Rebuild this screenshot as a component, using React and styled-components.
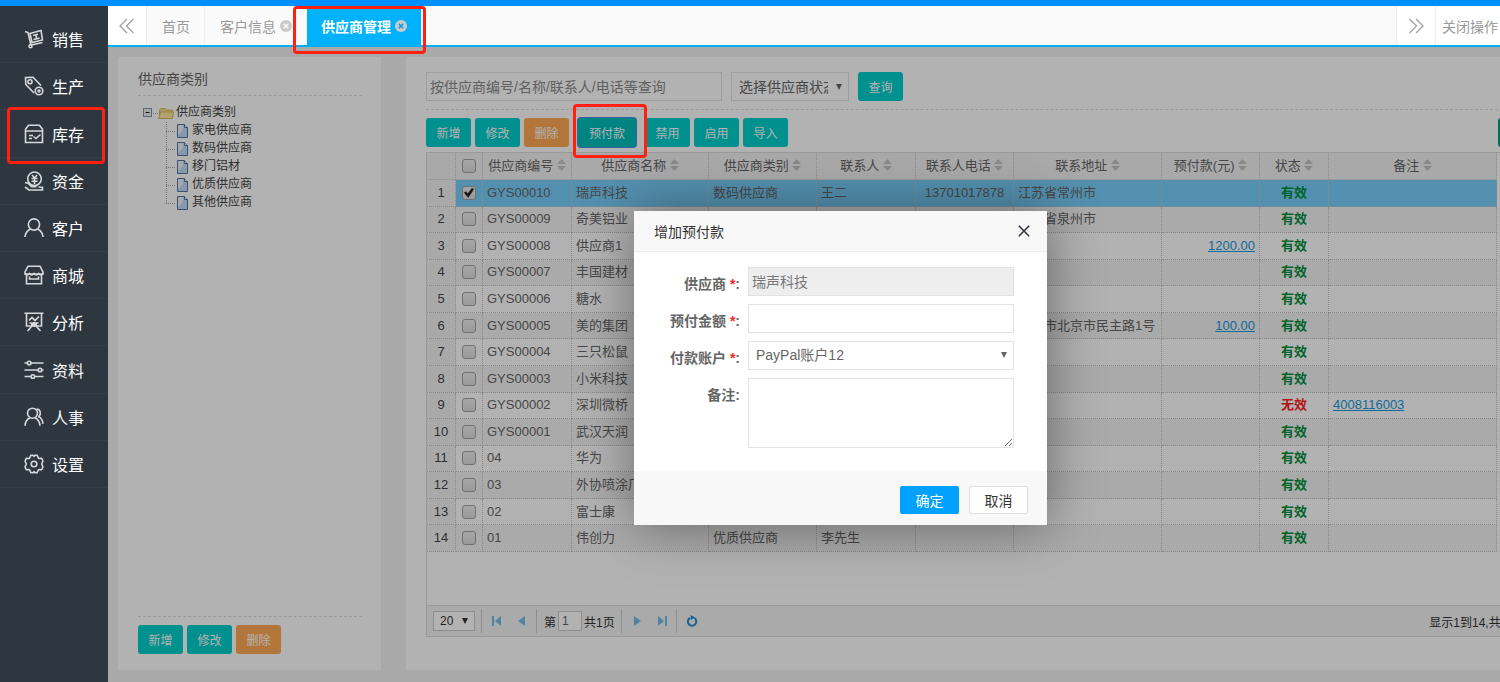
import React, { useState } from 'react';
import styled, { createGlobalStyle, css } from 'styled-components';

const menus = [
  { name: '销售', icon: 'sale' },
  { name: '生产', icon: 'produce' },
  { name: '库存', icon: 'stock', marked: true },
  { name: '资金', icon: 'money' },
  { name: '客户', icon: 'customer' },
  { name: '商城', icon: 'shop' },
  { name: '分析', icon: 'chart' },
  { name: '资料', icon: 'data' },
  { name: '人事', icon: 'staff' },
  { name: '设置', icon: 'setting' },
];

const categories = ['家电供应商', '数码供应商', '移门铝材', '优质供应商', '其他供应商'];

const columns = [
  { key: 'code', title: '供应商编号', width: 89 },
  { key: 'name', title: '供应商名称', width: 137 },
  { key: 'type', title: '供应商类别', width: 108 },
  { key: 'contact', title: '联系人', width: 99 },
  { key: 'phone', title: '联系人电话', width: 98, align: 'center' },
  { key: 'address', title: '联系地址', width: 148 },
  { key: 'prepay', title: '预付款(元)', width: 98, align: 'right', link: true },
  { key: 'status', title: '状态', width: 69, align: 'center' },
  { key: 'remark', title: '备注', width: 168, link: true },
];

const suppliers = [
  { code: 'GYS00010', name: '瑞声科技', type: '数码供应商', contact: '王二', phone: '13701017878', address: '江苏省常州市' },
  { code: 'GYS00009', name: '奇美铝业', address: '福建省泉州市' },
  { code: 'GYS00008', name: '供应商1', prepay: '1200.00' },
  { code: 'GYS00007', name: '丰国建材' },
  { code: 'GYS00006', name: '糖水' },
  { code: 'GYS00005', name: '美的集团', address: '北京市北京市民主路1号', prepay: '100.00' },
  { code: 'GYS00004', name: '三只松鼠' },
  { code: 'GYS00003', name: '小米科技' },
  { code: 'GYS00002', name: '深圳微桥', disabled: true, remark: '4008116003' },
  { code: 'GYS00001', name: '武汉天润' },
  { code: '04', name: '华为' },
  { code: '03', name: '外协喷涂厂' },
  { code: '02', name: '富士康' },
  { code: '01', name: '伟创力', type: '优质供应商', contact: '李先生' },
];

const menuIcons = {
  sale: (
    <>
      <path d="M1 2.500l3 1L7 16l11.500-2.500" />
      <path d="M6 4.500L17 1.500l1.500 9.500L8 13.500z" />
      <path d="M9 6.500l5-1.200M9.500 10.500l6-1.400M12 6l.5 4" />
      <circle cx="6.500" cy="17.200" r="1.500" />
    </>
  ),
  produce: (
    <>
      <path d="M10 17L1.800 8.500 1.500 1.500l7.500-.3L17 9.500" />
      <circle cx="6" cy="5.800" r="2" />
      <circle cx="15" cy="15" r="3.800" />
      <circle cx="15" cy="15" r="1" />
    </>
  ),
  stock: (
    <>
      <path d="M4.500 1.200h11l3 4v13.300h-17V5.200z" />
      <path d="M1.500 7h17M5 11.500h4M5 14.500h3M9.500 12.500l2.500 2 4.500-4" />
    </>
  ),
  money: (
    <>
      <circle cx="10.500" cy="7.800" r="6.800" />
      <path d="M8 4l2.500 3L13 4M7.500 7.500h6M7.500 10.200h6M10.500 7v6" />
      <path d="M1 11.500l3 .8 3.500 3.500h5M1 16l4 3h13.500v-2.500l-4-.5" />
    </>
  ),
  customer: (
    <>
      <circle cx="10" cy="6.500" r="5.600" />
      <path d="M1 19c.3-4 2.500-6.500 5.500-8M19 19c-.3-4-2.500-6.500-5.500-8" />
    </>
  ),
  shop: (
    <>
      <path d="M4 1.200h12L19 7v2H1V7z" />
      <path d="M2.500 9.500v9.300h15V9.500M1 8.500c1.500 2 3 2 4.500 0 1.500 2 3 2 4.500 0 1.500 2 3 2 4.500 0 1.500 2 3 2 4.500 0M5.500 11.500V14h9v-2.500" />
    </>
  ),
  chart: (
    <>
      <path d="M.5 1.200h19M2.500 2v12h15V2M5 8.500l3-3 3 3 4-4M5.500 11h9M7 12.500h6" />
      <path d="M8 14l-4.500 5M12 14l4.500 5M10 10v5" />
    </>
  ),
  data: (
    <>
      <path d="M.5 3H3.500M7 3h12.500M.5 10H14M17.800 10h1.700M.5 16.500H7M10.500 16.500h9" />
      <circle cx="5.200" cy="3" r="1.800" />
      <circle cx="16" cy="10" r="1.800" />
      <circle cx="8.800" cy="16.500" r="1.800" />
    </>
  ),
  staff: (
    <>
      <circle cx="8.500" cy="6.200" r="5" />
      <path d="M1 18.800c.2-4 2-6.500 5-8M16 18.800c-.2-4-2-6.500-5-8M12.800 2c3.700.3 4.700 5 2 7.800 2.500 1 3.700 3.500 4.200 7" />
    </>
  ),
  setting: (
    <>
      <path d="M7 1.200h2l1 1.200 1-1.200h2l1.600 3.300 3-.3L19 7l-1.300 3L19 13l-1.400 2.800-3-.3L13 18.800h-2l-1-1.200-1 1.200H7l-1.600-3.300-3 .3L1 13l1.300-3L1 7l1.400-2.800 3 .3z" strokeLinejoin="round" />
      <circle cx="10" cy="10" r="2.800" />
    </>
  ),
};

function SortIcon() {
  return (
    <svg width="9" height="12" viewBox="0 0 9 12" fill="#c4c4c4" aria-hidden="true">
      <path d="M4.500 0L9 5H0zM4.500 12L9 7H0z" />
    </svg>
  );
}

function CloseBadge() {
  return (
    <svg width="12" height="12" viewBox="0 0 12 12" aria-hidden="true">
      <circle cx="6" cy="6" r="6" fill="#cacaca" />
      <path d="M3.800 3.800l4.400 4.400M8.200 3.800l-4.400 4.400" stroke="currentColor" strokeWidth="1.600" />
    </svg>
  );
}

function Arrow() {
  return (
    <svg width="6" height="6" viewBox="0 0 6 6" fill="currentColor" aria-hidden="true">
      <path d="M0 0h6L3 6z" />
    </svg>
  );
}

function CategoryTree() {
  return (
    <Tree>
      <TreeRow>
        <svg width="10" height="10" viewBox="0 0 10 10" aria-hidden="true">
          <rect x=".5" y=".5" width="8" height="8" fill="#e8eef3" stroke="#8296a8" />
          <path d="M2.500 4.500h4" stroke="#222" />
        </svg>
        <svg width="5" height="18" aria-hidden="true">
          <path d="M0 9.500h5" stroke="#aaa" strokeDasharray="1 1" />
        </svg>
        <svg width="16" height="16" viewBox="0 0 16 16" aria-hidden="true">
          <path d="M1.500 13V5L3 3.500h4L8.500 5h6v8z" fill="#f8dc85" stroke="#d8b65c" />
          <path d="M.8 13.500L2.500 7h13l-1 6.500z" fill="#ffe9a0" stroke="#d8b65c" />
        </svg>
        <LeafText>供应商类别</LeafText>
      </TreeRow>
      <Leaves>
        {categories.map((item, i) => (
          <TreeRow key={item}>
            <svg width="10" height="18" aria-hidden="true">
              <path
                d={i === categories.length - 1 ? 'M.5 0v9M0 9.500h9' : 'M.5 0v18M0 9.500h9'}
                stroke="#aaa"
                strokeDasharray="1 1"
                fill="none"
              />
            </svg>
            <svg width="14" height="14" viewBox="0 0 14 14" aria-hidden="true">
              <path d="M1.500.500h7l3 3v10h-10z" fill="#c0daf6" stroke="#5674a0" />
              <path d="M2 1h5v5l-5 5z" fill="#eaf4ff" />
              <path d="M8.500.500v3h3" fill="#fff" stroke="#5674a0" />
            </svg>
            <LeafText>{item}</LeafText>
          </TreeRow>
        ))}
      </Leaves>
    </Tree>
  );
}

function SupplierTable({ checked, onCheck }) {
  return (
    <Table>
      <thead>
        <tr>
          <NumberHead />
          <CheckHead>
            <Checkbox type="checkbox" aria-label="全选" />
          </CheckHead>
          {columns.map((col) => (
            <HeadCell key={col.key} $width={col.width}>
              {col.title} <SortIcon />
            </HeadCell>
          ))}
        </tr>
      </thead>
      <tbody>
        {suppliers.map((row, i) => (
          <Row key={row.code} $even={i % 2 === 1} $selected={checked === row.code}>
            <NumberCell>{i + 1}</NumberCell>
            <Cell $align="center">
              <Checkbox
                type="checkbox"
                aria-label={row.name}
                checked={checked === row.code}
                onChange={() => onCheck(row.code)}
              />
            </Cell>
            {columns.map((col) => (
              <Cell key={col.key} $align={col.align}>
                {col.key === 'status' && <Status $off={row.disabled}>{row.disabled ? '无效' : '有效'}</Status>}
                {col.link && row[col.key] && <CellLink href="#">{row[col.key]}</CellLink>}
                {!col.link && row[col.key]}
              </Cell>
            ))}
          </Row>
        ))}
      </tbody>
    </Table>
  );
}

function Pagination() {
  return (
    <Pager>
      <SelectBox $small>
        <Select $small aria-label="每页条数" defaultValue="20">
          <option>20</option>
          <option>50</option>
        </Select>
        <Arrow />
      </SelectBox>
      <Divider />
      <PageButton aria-label="首页">
        <svg width="10" height="10" viewBox="0 0 10 10"><path d="M0 0h2v10H0zM9 0v10L3 5z" /></svg>
      </PageButton>
      <PageButton aria-label="上一页">
        <svg width="10" height="10" viewBox="0 0 10 10"><path d="M8 0v10L1 5z" /></svg>
      </PageButton>
      <Divider />
      <PageLabel>
        第<PageInput defaultValue="1" aria-label="页码" />共1页
      </PageLabel>
      <Divider />
      <PageButton aria-label="下一页">
        <svg width="10" height="10" viewBox="0 0 10 10"><path d="M2 0v10L9 5z" /></svg>
      </PageButton>
      <PageButton aria-label="末页">
        <svg width="10" height="10" viewBox="0 0 10 10"><path d="M8 0h2v10H8zM1 0v10L7 5z" /></svg>
      </PageButton>
      <Divider />
      <PageButton aria-label="刷新">
        <svg width="12" height="12" viewBox="0 0 12 12">
          <path d="M4 2.800A4.200 4.200 0 1 0 8.500 3" fill="none" stroke="#1c8fd0" strokeWidth="2" />
          <path d="M4.500 0l4.500 2.200L5 5z" fill="#1c8fd0" />
        </svg>
      </PageButton>
      <PageInfo>显示1到14,共14记录</PageInfo>
    </Pager>
  );
}

function PrepayDialog() {
  return (
    <Dialog role="dialog" aria-labelledby="dialog-title">
      <DialogHead>
        <span id="dialog-title">增加预付款</span>
        <CloseButton aria-label="关闭">
          <svg width="12" height="12" viewBox="0 0 12 12">
            <path d="M.8.800l10.400 10.400M11.200.800L.8 11.200" stroke="#2e2d3c" strokeWidth="1.500" />
          </svg>
        </CloseButton>
      </DialogHead>
      <DialogBody>
        <Label htmlFor="supplier">供应商 <Required>*</Required>:</Label>
        <Input id="supplier" value="瑞声科技" disabled readOnly />
        <Label htmlFor="amount">预付金额 <Required>*</Required>:</Label>
        <Input id="amount" />
        <Label htmlFor="account">付款账户 <Required>*</Required>:</Label>
        <SelectBox>
          <Select id="account" defaultValue="PayPal账户12">
            <option>PayPal账户12</option>
          </Select>
          <Arrow />
        </SelectBox>
        <Label htmlFor="remark">备注:</Label>
        <Textarea id="remark" />
      </DialogBody>
      <DialogFoot>
        <DialogButton $primary>确定</DialogButton>
        <DialogButton>取消</DialogButton>
      </DialogFoot>
    </Dialog>
  );
}

function App() {
  const [checked, setChecked] = useState('GYS00010');

  return (
    <Page>
      <GlobalStyle />
      <Sidebar>
        <Menu>
          {menus.map((menu) => (
            <MenuItem key={menu.name} href="#">
              <svg width="20" height="20" viewBox="0 0 20 20" fill="none" stroke="#d5d9dc" strokeWidth="1.600" aria-hidden="true">
                {menuIcons[menu.icon]}
              </svg>
              {menu.name}
              {menu.marked && <MenuMark />}
            </MenuItem>
          ))}
        </Menu>
      </Sidebar>
      <Content>
        <TabBar>
          <TabArrow aria-label="向左">
            <svg width="16" height="16" viewBox="0 0 16 16" fill="none" stroke="#a0a0a0" strokeWidth="1.300">
              <path d="M8 1L1 8l7 7M14.500 1l-7 7 7 7" />
            </svg>
          </TabArrow>
          <Tab>首页</Tab>
          <Tab>客户信息<CloseBadge /></Tab>
          <Tab $active>供应商管理<CloseBadge /><TabMark /></Tab>
          <TabSpace />
          <TabArrow aria-label="向右">
            <svg width="16" height="16" viewBox="0 0 16 16" fill="none" stroke="#a0a0a0" strokeWidth="1.300">
              <path d="M1.500 1l7 7-7 7M8 1l7 7-7 7" />
            </svg>
          </TabArrow>
          <CloseMenu>关闭操作</CloseMenu>
        </TabBar>
        <Workspace>
          <Side>
            <SideTitle>供应商类别</SideTitle>
            <CategoryTree />
            <SideFoot>
              <Button>新增</Button>
              <Button>修改</Button>
              <Button $warn>删除</Button>
            </SideFoot>
          </Side>
          <Main>
            <SearchRow>
              <SearchInput placeholder="按供应商编号/名称/联系人/电话等查询" aria-label="查询条件" />
              <SelectBox $narrow>
                <Select aria-label="供应商状态" defaultValue="选择供应商状态">
                  <option>选择供应商状态</option>
                </Select>
                <Arrow />
              </SelectBox>
              <Button>查询</Button>
            </SearchRow>
            <Toolbar>
              <ButtonGroup>
                <Button>新增</Button>
                <Button>修改</Button>
                <Button $warn>删除</Button>
              </ButtonGroup>
              <Button $focused>预付款<ButtonMark /></Button>
              <ButtonGroup>
                <Button>禁用</Button>
                <Button>启用</Button>
                <Button>导入</Button>
              </ButtonGroup>
              <ExportButton aria-label="导出" />
            </Toolbar>
            <Grid>
              <GridView>
                <SupplierTable checked={checked} onCheck={setChecked} />
              </GridView>
              <Pagination />
            </Grid>
          </Main>
          <Shade>
            <PrepayDialog />
          </Shade>
        </Workspace>
      </Content>
    </Page>
  );
}

const GlobalStyle = createGlobalStyle`
  * {
    box-sizing: border-box;
  }

  body {
    margin: 0;
    overflow: hidden;
  }

  body, button, input, select, textarea {
    font-family: "Liberation Sans", "Noto Sans CJK SC", sans-serif;
    font-size: 14px;
    color: #666;
  }

  button {
    cursor: pointer;
  }

  svg {
    flex: none;
  }
`;

const Page = styled.div`
  display: flex;
  min-height: 100vh;
  border-top: 6px solid #008ffb;
  overflow: hidden;
`;

const Sidebar = styled.nav`
  flex: none;
  width: 108px;
  padding-top: 10px;
  background: #2e3740;
`;

const Menu = styled.div`
  display: flex;
  flex-direction: column;
  height: 472px;
`;

const MenuItem = styled.a`
  position: relative;
  display: flex;
  align-items: center;
  gap: 8px;
  flex: 1;
  padding-left: 24px;
  border-bottom: 1px solid #333d47;
  font-size: 16px;
  color: #fff;
  text-decoration: none;
`;

const mark = css`
  position: absolute;
  border: 3px solid #ff2010;
  border-radius: 4px;
  pointer-events: none;
  z-index: 10;
`;

const MenuMark = styled.span`
  ${mark}
  inset: -3px 3px -7px 7px;
`;

const TabMark = styled.span`
  ${mark}
  inset: 0 -5px -9px -14px;
`;

const ButtonMark = styled.span`
  ${mark}
  inset: -14px -11px -11px -5px;
`;

const Content = styled.div`
  display: flex;
  flex-direction: column;
  flex: 1;
  min-width: 0;
`;

const TabBar = styled.div`
  display: flex;
  height: 41px;
  flex: none;
  background: #fafafa;
  border-bottom: 2px solid #00aef8;
`;

const Tab = styled.button`
  position: relative;
  display: flex;
  align-items: center;
  gap: 4px;
  padding: 0 14px 0 15px;
  border: 0;
  border-right: 1px solid #f0f0f0;
  background: #fafafa;
  color: #999;

  svg {
    color: #fafafa;
  }

  ${(props) =>
    props.$active &&
    css`
      padding: 0 14px;
      border: 0;
      background: #00b2fb;
      color: #fff;
      font-weight: bold;

      svg {
        color: #00a0e8;
      }
    `}
`;

const TabArrow = styled.button`
  display: flex;
  align-items: center;
  justify-content: center;
  width: 39px;
  padding: 0;
  border: 0;
  border-right: 1px solid #eee;
  background: #fff;
`;

const TabSpace = styled.div`
  flex: 1;
  border-right: 1px solid #eee;
`;

const CloseMenu = styled.button`
  padding: 0 2px 0 6px;
  border: 0;
  background: #fff;
  color: #999;
`;

/* the work area runs on past the right edge of the frame */
const Workspace = styled.div`
  position: relative;
  display: flex;
  flex: 1;
  gap: 25px;
  width: calc(100% + 73px);
  padding: 10px 10px 12px;
  background: #f3f3f3;
`;

const Side = styled.aside`
  display: flex;
  flex-direction: column;
  flex: none;
  width: 263px;
  padding: 10px 19px 16px 20px;
  background: #fff;
`;

const SideTitle = styled.div`
  padding-bottom: 4px;
  line-height: 24px;
  border-bottom: 1px dashed #ddd;
`;

const SideFoot = styled.div`
  display: flex;
  gap: 4px;
  padding-top: 8px;
  border-top: 1px dashed #ddd;
`;

const Tree = styled.div`
  flex: 1;
  padding: 8px 5px;
  font-size: 12px;
  color: #444;
`;

const TreeRow = styled.div`
  display: flex;
  align-items: center;
  height: 18px;
  white-space: nowrap;
`;

const Leaves = styled.div`
  padding-left: 23px;
`;

const LeafText = styled.span`
  padding-left: 2px;
  line-height: 16px;
  padding-bottom: 2px;
`;

const Main = styled.main`
  display: flex;
  flex-direction: column;
  flex: 1;
  min-width: 0;
  padding: 15px 20px 33px;
  background: #fff;
`;

const Button = styled.button`
  position: relative;
  flex: none;
  min-width: 45px;
  height: 29px;
  padding: 0 10px;
  border: 0;
  border-radius: 3px;
  font-size: 12px;
  color: #fff;
  background: ${(props) => (props.$warn ? '#ffa953' : '#00cecc')};

  ${(props) =>
    props.$focused &&
    css`
      padding: 0 11px;
      background: #00bdb9;
      box-shadow: 0 0 0 1px #4a90e8;
    `}
`;

const SearchRow = styled.div`
  display: flex;
  gap: 9px;
  padding-bottom: 8px;
  border-bottom: 1px dashed #ddd;
`;

const Toolbar = styled.div`
  display: flex;
  gap: 9px;
  padding: 8px 0 5px;
`;

const ButtonGroup = styled.div`
  display: flex;
  gap: 4px;
`;

const ExportButton = styled(Button)`
  margin-left: auto;
  background: #009b80;
`;

const field = css`
  width: 100%;
  height: 29px;
  padding: 0 3px;
  border: 1px solid #e2e2e2;
  border-radius: 0;
  background: #fff;
  outline: none;
`;

const Input = styled.input`
  ${field}

  &:disabled {
    background: #eee;
    color: #777;
  }
`;

const SearchInput = styled(Input)`
  width: 296px;

  &::placeholder {
    color: #8c8c8c;
  }
`;

const SelectBox = styled.div`
  position: relative;
  display: flex;
  width: ${(props) => (props.$small ? '42px' : props.$narrow ? '118px' : '100%')};

  svg {
    position: absolute;
    top: calc(50% - 3px);
    right: 7px;
    pointer-events: none;
  }
`;

const Select = styled.select`
  ${field}
  appearance: none;
  padding: 0 20px 0 7px;

  ${(props) =>
    props.$small &&
    css`
      height: 20px;
      padding: 0 0 0 6px;
      border-color: #ccc;
      font-size: 12px;
      color: #333;
    `}
`;

const Grid = styled.div`
  display: flex;
  flex-direction: column;
  flex: 1;
  border: 1px solid #ddd;
`;

const GridView = styled.div`
  flex: 1;
  overflow: hidden;
`;

const Table = styled.table`
  width: 1070px;
  height: 399px;
  table-layout: fixed;
  border-collapse: separate;
  border-spacing: 0;
  font-size: 13px;
`;

const Cell = styled.td`
  height: 26px;
  padding: 0 10px 0 4px;
  border-right: 1px dotted #c4c4c4;
  border-bottom: 1px dotted #c4c4c4;
  line-height: 18px;
  text-align: ${(props) => props.$align || 'left'};
  white-space: nowrap;
  overflow: hidden;

  ${(props) =>
    props.$align === 'center' &&
    css`
      padding: 0;
    `}

  ${(props) =>
    props.$align === 'right' &&
    css`
      padding: 0 4px;
    `}
`;

const HeadCell = styled.th`
  height: 27px;
  width: ${(props) => props.$width}px;
  padding: 0;
  border-right: 1px dotted #c4c4c4;
  border-bottom: 1px solid #ddd;
  background: #f3f3f3;
  font-weight: normal;
  line-height: 18px;
  white-space: nowrap;

  svg {
    vertical-align: -1px;
  }
`;

const NumberHead = styled(HeadCell)`
  width: 29px;
`;

const CheckHead = styled(HeadCell)`
  width: 27px;
`;

const NumberCell = styled(Cell)`
  padding: 0;
  text-align: center;
  background: #f3f3f3;
  color: #444;
`;

const Row = styled.tr`
  background: ${(props) => (props.$selected ? '#78cefb' : props.$even ? '#f4f4f4' : '#fff')};
`;

const Checkbox = styled.input`
  appearance: none;
  display: block;
  width: 14px;
  height: 14px;
  margin: 0 auto;
  border: 1px solid #a2a2a2;
  border-radius: 3px;
  background: linear-gradient(#efefef, #dcdcdc);

  &:checked::after {
    content: '';
    display: block;
    width: 10px;
    height: 10px;
    margin: 1px;
    background: #222;
    clip-path: polygon(0 50%, 20% 35%, 38% 58%, 80% 0, 100% 15%, 42% 100%);
  }
`;

const Status = styled.span`
  font-weight: bold;
  color: ${(props) => (props.$off ? '#ff1d24' : '#00903c')};
`;

const CellLink = styled.a`
  color: #1a98dc;
`;

const Pager = styled.div`
  display: flex;
  align-items: center;
  height: 31px;
  padding: 0 4px 0 6px;
  border-top: 1px solid #ddd;
  background: #f4f4f4;
  font-size: 12px;
  color: #333;
`;

const Divider = styled.span`
  width: 1px;
  height: 24px;
  margin: 0 7px 0 6px;
  background: #ccc;
`;

const PageButton = styled.button`
  display: flex;
  align-items: center;
  justify-content: center;
  width: 16px;
  height: 20px;
  padding: 0;
  border: 0;
  background: none;

  svg {
    fill: #72bfea;
  }

  & + & {
    margin-left: 9px;
  }
`;

const PageLabel = styled.label`
  display: flex;
  align-items: center;
  gap: 2px;
`;

const PageInput = styled.input`
  width: 24px;
  height: 20px;
  padding: 0 3px;
  border: 1px solid #ccc;
  background: #fff;
  font-size: 12px;
`;

const PageInfo = styled.span`
  margin-left: auto;
  white-space: nowrap;
`;

const Shade = styled.div`
  position: absolute;
  inset: 0;
  display: flex;
  align-items: center;
  justify-content: center;
  padding-top: 6px;
  background: rgba(0, 0, 0, 0.3);
  z-index: 5;
`;

const Dialog = styled.section`
  width: 413px;
  background: #fff;
  box-shadow: 1px 1px 50px rgba(0, 0, 0, 0.4);
`;

const DialogHead = styled.header`
  display: flex;
  align-items: center;
  justify-content: space-between;
  height: 41px;
  padding: 0 17px 0 20px;
  border-bottom: 1px solid #eee;
  background: #f8f8f8;
  color: #333;
`;

const CloseButton = styled.button`
  display: flex;
  padding: 0;
  border: 0;
  background: none;
`;

const DialogBody = styled.div`
  display: grid;
  grid-template-columns: 86px 266px;
  gap: 8px;
  padding: 15px 20px 23px;
`;

const Label = styled.label`
  padding-top: 6px;
  line-height: 22px;
  font-weight: bold;
  text-align: right;
  white-space: nowrap;
`;

const Required = styled.span`
  color: #ff2222;
`;

const Textarea = styled.textarea`
  ${field}
  height: 70px;
`;

const DialogFoot = styled.footer`
  display: flex;
  justify-content: flex-end;
  gap: 10px;
  padding: 15px 19px 11px;
  background: #f8f8f8;
`;

const DialogButton = styled.button`
  width: 59px;
  height: 28px;
  padding: 0;
  border: 1px solid ${(props) => (props.$primary ? '#00a0ff' : '#dedede')};
  border-radius: 2px;
  background: ${(props) => (props.$primary ? '#00a0ff' : '#fff')};
  color: ${(props) => (props.$primary ? '#fff' : '#333')};
`;

export default App;
